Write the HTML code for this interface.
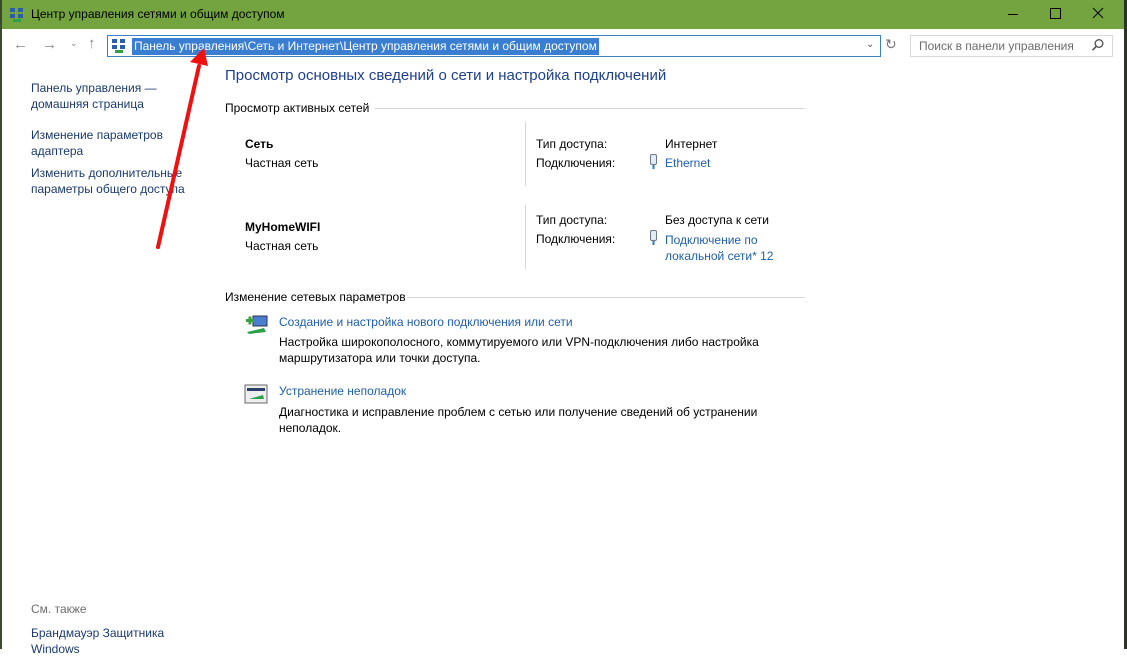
<!DOCTYPE html>
<html><head><meta charset="utf-8"><style>
*{margin:0;padding:0;box-sizing:border-box}
body{width:1127px;height:649px;overflow:hidden;background:#fff;font-family:"Liberation Sans","Noto Sans CJK SC",sans-serif;font-size:12px;color:#000;position:relative}
.a{position:absolute;white-space:nowrap}
.l{color:#1e5fa8}
.n{color:#1a3a6e}
.g{color:#6d6d6d}
</style></head><body>
<div class="a" style="left:0;top:0;width:1127px;height:29px;background:#73a43f"></div>
<div class="a" style="left:0;top:0;width:2px;height:649px;background:#3c4a2e"></div>
<div class="a" style="left:1124px;top:0;width:3px;height:649px;background:#2c3322"></div>
<svg class="a" style="left:9px;top:7px" width="16" height="15" viewBox="0 0 16 15"><rect x="1" y="1" width="5" height="4" fill="#2b5da8"/><rect x="9" y="1" width="5" height="4" fill="#2b5da8"/><rect x="1" y="7" width="5" height="4" fill="#2b5da8"/><rect x="9" y="7" width="5" height="4" fill="#2b5da8"/><rect x="4" y="12" width="8" height="3" fill="#2da04a"/></svg>
<div class="a" style="left:31px;top:7px;font-size:12px;color:#000">Центр управления сетями и общим доступом</div>
<svg class="a" style="left:1000px;top:0" width="120" height="29" viewBox="0 0 120 29"><path d="M8 14.5 H18" stroke="#000" stroke-width="1"/><rect x="50.5" y="8.5" width="10" height="10" fill="none" stroke="#000"/><path d="M93 8 L103 18 M103 8 L93 18" stroke="#000" stroke-width="1"/></svg>
<div class="a" style="left:13px;top:36px;font-size:15px;color:#888">←</div>
<div class="a" style="left:42px;top:36px;font-size:15px;color:#888">→</div>
<div class="a" style="left:70px;top:38px;font-size:9px;color:#888">⌄</div>
<div class="a" style="left:88px;top:35px;font-size:15px;color:#888">↑</div>
<div class="a" style="left:107px;top:35px;width:774px;height:22px;border:1px solid #3b7fc4"></div>
<svg class="a" style="left:111px;top:38px" width="16" height="15" viewBox="0 0 16 15"><rect x="1" y="1" width="5" height="4" fill="#2b5da8"/><rect x="9" y="1" width="5" height="4" fill="#2b5da8"/><rect x="1" y="7" width="5" height="4" fill="#2b5da8"/><rect x="9" y="7" width="5" height="4" fill="#2b5da8"/><rect x="4" y="12" width="8" height="3" fill="#2da04a"/></svg>
<div class="a" style="left:132px;top:38px;height:17px;width:467px;background:#3a7ed2"></div>
<div class="a" style="left:134px;top:39px;color:#fff">Панель управления\Сеть и Интернет\Центр управления сетями и общим доступом</div>
<div class="a" style="left:866px;top:39px;font-size:10px;color:#555">⌄</div>
<div class="a" style="left:885px;top:36px;font-size:14px;color:#777">↻</div>
<div class="a" style="left:910px;top:35px;width:203px;height:22px;border:1px solid #d9d9d9"></div>
<div class="a g" style="left:919px;top:39px">Поиск в панели управления</div>
<svg class="a" style="left:1091px;top:38px" width="14" height="14" viewBox="0 0 14 14"><circle cx="8" cy="5.5" r="3.8" fill="none" stroke="#555" stroke-width="1.4"/><path d="M5.3 8.3 L1.5 12.2" stroke="#555" stroke-width="1.6"/></svg>

<div class="a n" style="left:31px;top:80px;line-height:16px">Панель управления —<br>домашняя страница</div>
<div class="a n" style="left:31px;top:127px;line-height:16px">Изменение параметров<br>адаптера</div>
<div class="a n" style="left:31px;top:165px;line-height:16px">Изменить дополнительные<br>параметры общего доступа</div>
<div class="a g" style="left:31px;top:602px">См. также</div>
<div class="a n" style="left:31px;top:625px;line-height:16px">Брандмауэр Защитника<br>Windows</div>

<div class="a" style="left:225px;top:67px;font-size:15px;color:#1e3f8c">Просмотр основных сведений о сети и настройка подключений</div>
<div class="a" style="left:225px;top:101px">Просмотр активных сетей</div>
<div class="a" style="left:375px;top:108px;width:430px;height:1px;background:#d5d5d5"></div>
<div class="a" style="left:245px;top:137px;font-weight:bold">Сеть</div>
<div class="a" style="left:245px;top:156px">Частная сеть</div>
<div class="a" style="left:525px;top:122px;width:1px;height:64px;background:#d5d5d5"></div>
<div class="a" style="left:536px;top:137px">Тип доступа:</div>
<div class="a" style="left:536px;top:156px">Подключения:</div>
<div class="a" style="left:665px;top:137px">Интернет</div>
<svg class="a" style="left:649px;top:154px" width="10" height="16" viewBox="0 0 10 16"><rect x="1.5" y="0.5" width="6" height="10" rx="1.5" fill="#e3ebf3" stroke="#6b7a8a"/><rect x="3.5" y="11" width="2" height="4" fill="#2a7ed0"/></svg>
<div class="a l" style="left:665px;top:156px">Ethernet</div>
<div class="a" style="left:245px;top:220px;font-weight:bold">MyHomeWIFI</div>
<div class="a" style="left:245px;top:239px">Частная сеть</div>
<div class="a" style="left:525px;top:205px;width:1px;height:64px;background:#d5d5d5"></div>
<div class="a" style="left:536px;top:213px">Тип доступа:</div>
<div class="a" style="left:536px;top:232px">Подключения:</div>
<div class="a" style="left:665px;top:213px">Без доступа к сети</div>
<svg class="a" style="left:649px;top:230px" width="10" height="16" viewBox="0 0 10 16"><rect x="1.5" y="0.5" width="6" height="10" rx="1.5" fill="#e3ebf3" stroke="#6b7a8a"/><rect x="3.5" y="11" width="2" height="4" fill="#2a7ed0"/></svg>
<div class="a l" style="left:665px;top:232px;line-height:16px">Подключение по<br>локальной сети* 12</div>

<div class="a" style="left:225px;top:290px">Изменение сетевых параметров</div>
<div class="a" style="left:407px;top:297px;width:398px;height:1px;background:#d5d5d5"></div>
<svg class="a" style="left:244px;top:313px" width="26" height="22" viewBox="0 0 26 22"><rect x="9" y="3" width="14" height="10" fill="#4a7fd0" stroke="#335"/><rect x="2" y="6" width="8" height="3" fill="#3aa23a"/><rect x="4.5" y="3.5" width="3" height="8" fill="#3aa23a"/><path d="M3 19 L20 15 L22 19 L5 21Z" fill="#2aa04a"/></svg>
<div class="a l" style="left:279px;top:315px">Создание и настройка нового подключения или сети</div>
<div class="a" style="left:279px;top:334px;line-height:16px">Настройка широкополосного, коммутируемого или VPN-подключения либо настройка<br>маршрутизатора или точки доступа.</div>
<svg class="a" style="left:244px;top:384px" width="26" height="22" viewBox="0 0 26 22"><rect x="1" y="1" width="22" height="18" fill="#eee" stroke="#666"/><rect x="3" y="4" width="18" height="3" fill="#2b3f6b"/><path d="M5 15 L19 11 L20 15 Z" fill="#2aa04a"/></svg>
<div class="a l" style="left:279px;top:384px">Устранение неполадок</div>
<div class="a" style="left:279px;top:404px;line-height:16px">Диагностика и исправление проблем с сетью или получение сведений об устранении<br>неполадок.</div>

<svg class="a" style="left:0;top:0" width="1127" height="649"><path d="M158 247 L199 66" stroke="#f01010" stroke-width="4" stroke-linecap="round"/><path d="M190 62 L204 48 L208 66 Z" fill="#f01010"/></svg>
</body></html>
